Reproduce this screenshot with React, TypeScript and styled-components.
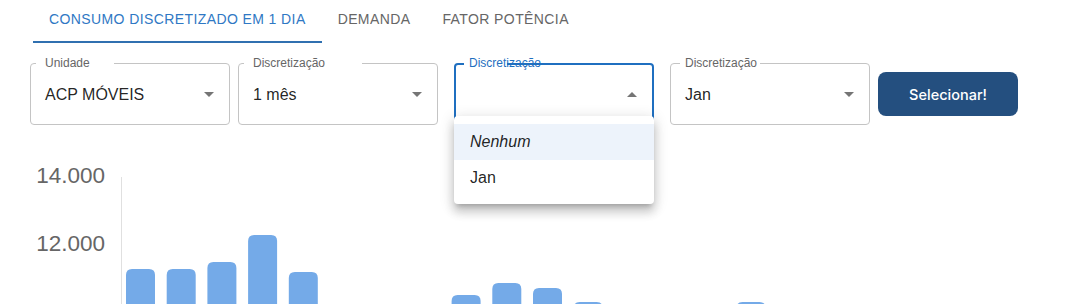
import styled, { createGlobalStyle } from "styled-components";

const GlobalStyle = createGlobalStyle`
  html, body {
    margin: 0;
    padding: 0;
    overflow: hidden;
    background: #fff;
    font-family: "Liberation Sans", Arial, sans-serif;
  }
`;

const Page = styled.div`
  height: 304px;
  overflow: hidden;
`;

const TabBar = styled.nav`
  display: flex;
  height: 43px;
  padding-left: 33px;
`;

const Tab = styled.div<{ $active?: boolean }>`
  position: relative;
  display: flex;
  align-items: center;
  padding: 0 16px 6px;
  font-size: 14px;
  letter-spacing: 0.4px;
  text-transform: uppercase;
  color: ${(p) => (p.$active ? "#2f78c4" : "#666")};
  ${(p) =>
    p.$active &&
    `
    &::after {
      content: "";
      position: absolute;
      left: 0;
      right: 0;
      bottom: 0;
      height: 2px;
      background: #3070b0;
    }
  `}
`;

const FilterRow = styled.div`
  display: flex;
  align-items: center;
  margin-top: 20px;
  padding-left: 30px;
`;

const Field = styled.div<{ $focused?: boolean; $gap: number }>`
  position: relative;
  box-sizing: border-box;
  display: flex;
  align-items: center;
  justify-content: space-between;
  width: 200px;
  height: 62px;
  margin-left: ${(p) => p.$gap}px;
  padding: 1px 15px 0 14px;
  border: ${(p) => (p.$focused ? "2px solid #1f6fc0" : "1px solid #c4c4c4")};
  border-radius: 4px;
  font-size: 16px;
  color: rgba(0, 0, 0, 0.87);
`;

const Notch = styled.span<{ $left: number; $width: number }>`
  position: absolute;
  top: -2px;
  left: ${(p) => p.$left}px;
  width: ${(p) => p.$width}px;
  height: 3px;
  background: #fff;
`;

const Label = styled.span<{ $focused?: boolean }>`
  position: absolute;
  top: ${(p) => (p.$focused ? -9 : -8)}px;
  left: ${(p) => (p.$focused ? 13 : 14)}px;
  font-size: 12px;
  line-height: 14px;
  color: ${(p) => (p.$focused ? "#1f6fc0" : "#666")};
  white-space: nowrap;
`;

const Value = styled.span`
  white-space: nowrap;
`;

const Arrow = styled.span<{ $open?: boolean }>`
  width: 0;
  height: 0;
  margin-left: auto;
  border-left: 5px solid transparent;
  border-right: 5px solid transparent;
  ${(p) =>
    p.$open
      ? "border-bottom: 5px solid #757575;"
      : "border-top: 5px solid #757575;"}
`;

const Menu = styled.ul`
  position: absolute;
  top: 51px;
  left: -2px;
  z-index: 2;
  width: 200px;
  margin: 0;
  padding: 8px 0;
  list-style: none;
  background: #fff;
  border-radius: 4px;
  box-shadow: 0 5px 5px -3px rgba(0, 0, 0, 0.2), 0 8px 10px 1px rgba(0, 0, 0, 0.14),
    0 3px 14px 2px rgba(0, 0, 0, 0.12);
`;

const MenuItem = styled.li<{ $selected?: boolean; $italic?: boolean }>`
  display: flex;
  align-items: center;
  height: 36px;
  padding: 0 16px;
  font-size: 16px;
  font-style: ${(p) => (p.$italic ? "italic" : "normal")};
  color: rgba(0, 0, 0, 0.87);
  background: ${(p) => (p.$selected ? "#edf3fb" : "transparent")};
`;

const Button = styled.button`
  width: 140px;
  height: 44px;
  margin-left: 8px;
  border: none;
  border-radius: 8px;
  background: #244f7f;
  color: #fff;
  font-family: Inter, "Liberation Sans", sans-serif;
  font-size: 14.5px;
  font-weight: 500;
  cursor: pointer;
`;

const ChartWrap = styled.div`
  margin-top: 25px;
`;

const BAR_COLOR = "#74aae8";
const values = [
  11235, 11235, 11441, 12235, 11147, 9700, 9600, 9800, 10471, 10824, 10676,
  10265, 9900, 9750, 9850, 10265, 9700, 9600, 9800, 9900, 9700, 9800,
];

// y (in svg units) for a value; 14.000 sits at 25, 2.000 = 68px
const yOf = (v: number) => 25 + ((14000 - v) * 68) / 2000;

function barPath(x: number, top: number, w: number, bottom: number) {
  const r = 6;
  return `M${x} ${bottom} V${top + r} Q${x} ${top} ${x + r} ${top} H${x + w - r} Q${x + w} ${top} ${x + w} ${top + r} V${bottom} Z`;
}

function Chart() {
  return (
    <ChartWrap>
      <svg width="1066" height="160" viewBox="0 0 1066 160">
        <text x="105" y={yOf(14000)} textAnchor="end" dominantBaseline="central" fontSize="22.5" fill="#666" fontFamily="Liberation Sans, Arial, sans-serif">
          14.000
        </text>
        <text x="105" y={yOf(12000)} textAnchor="end" dominantBaseline="central" fontSize="22.5" fill="#666" fontFamily="Liberation Sans, Arial, sans-serif">
          12.000
        </text>
        <line x1="121.5" y1="27" x2="121.5" y2="160" stroke="#e0e0e0" strokeWidth="1" />
        {values.map((v, i) => (
          <path key={i} d={barPath(126 + i * 40.7, yOf(v), 29, 170)} fill={BAR_COLOR} />
        ))}
      </svg>
    </ChartWrap>
  );
}

export default function App() {
  return (
    <Page>
      <GlobalStyle />
      <TabBar>
        <Tab $active>Consumo discretizado em 1 dia</Tab>
        <Tab>Demanda</Tab>
        <Tab>Fator potência</Tab>
      </TabBar>
      <FilterRow>
        <Field $gap={0}>
          <Notch $left={5} $width={78} />
          <Label>Unidade</Label>
          <Value>ACP MÓVEIS</Value>
          <Arrow />
        </Field>
        <Field $gap={8}>
          <Notch $left={5} $width={118} />
          <Label>Discretização</Label>
          <Value>1 mês</Value>
          <Arrow />
        </Field>
        <Field $gap={16} $focused>
          <Notch $left={8} $width={43} />
          <Label $focused>Discretização</Label>
          <Value />
          <Arrow $open />
          <Menu>
            <MenuItem $selected $italic>
              Nenhum
            </MenuItem>
            <MenuItem>Jan</MenuItem>
          </Menu>
        </Field>
        <Field $gap={16}>
          <Notch $left={9} $width={80} />
          <Label>Discretização</Label>
          <Value>Jan</Value>
          <Arrow />
        </Field>
        <Button>Selecionar!</Button>
      </FilterRow>
      <Chart />
    </Page>
  );
}
